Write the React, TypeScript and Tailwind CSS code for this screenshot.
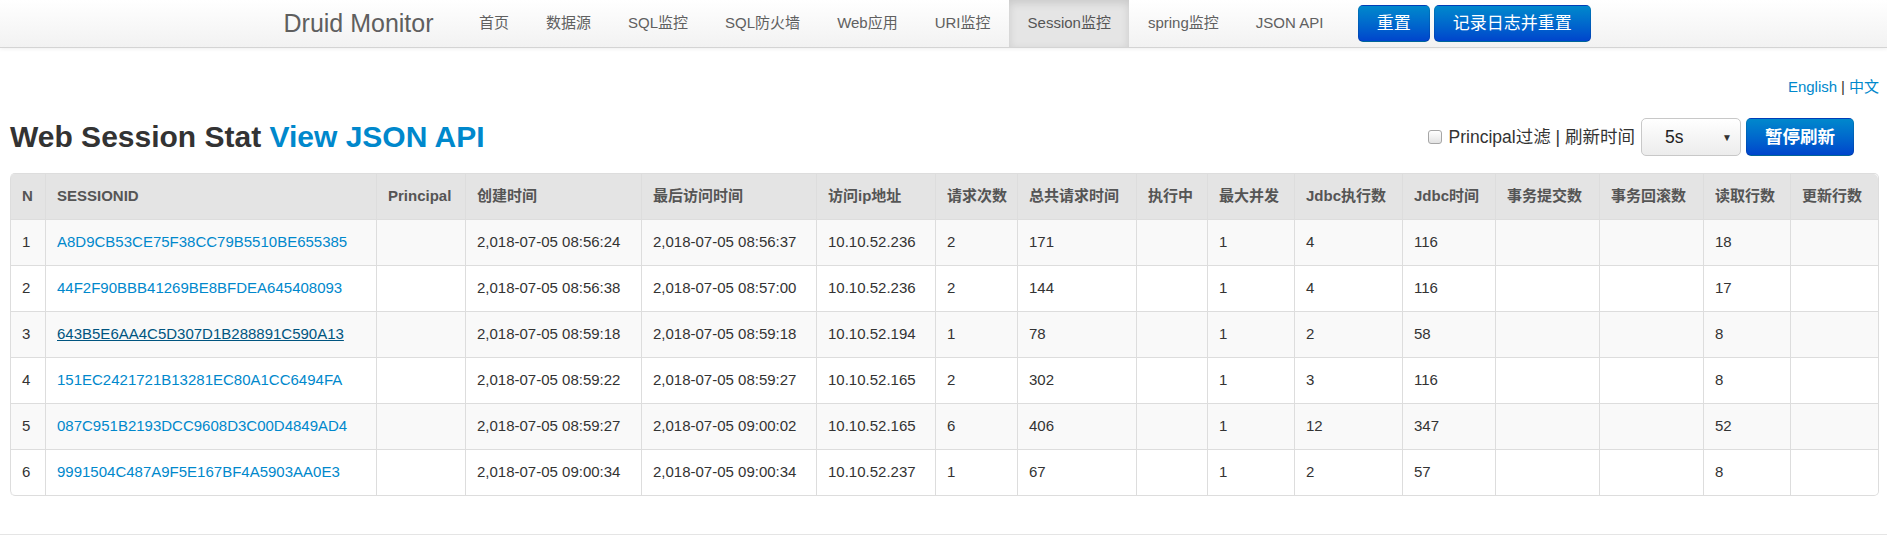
import React from "react"

const navItems = ["首页", "数据源", "SQL监控", "SQL防火墙", "Web应用", "URI监控", "Session监控", "spring监控", "JSON API"]

const columns: { label: string; width: number }[] = [
  { label: "N", width: 35 },
  { label: "SESSIONID", width: 331 },
  { label: "Principal", width: 89 },
  { label: "创建时间", width: 176 },
  { label: "最后访问时间", width: 175 },
  { label: "访问ip地址", width: 119 },
  { label: "请求次数", width: 82 },
  { label: "总共请求时间", width: 119 },
  { label: "执行中", width: 71 },
  { label: "最大并发", width: 87 },
  { label: "Jdbc执行数", width: 108 },
  { label: "Jdbc时间", width: 93 },
  { label: "事务提交数", width: 104 },
  { label: "事务回滚数", width: 104 },
  { label: "读取行数", width: 87 },
  { label: "更新行数", width: 88 },
]

const rows: string[][] = [
  ["1", "A8D9CB53CE75F38CC79B5510BE655385", "", "2,018-07-05 08:56:24", "2,018-07-05 08:56:37", "10.10.52.236", "2", "171", "", "1", "4", "116", "", "", "18", ""],
  ["2", "44F2F90BBB41269BE8BFDEA645408093", "", "2,018-07-05 08:56:38", "2,018-07-05 08:57:00", "10.10.52.236", "2", "144", "", "1", "4", "116", "", "", "17", ""],
  ["3", "643B5E6AA4C5D307D1B288891C590A13", "", "2,018-07-05 08:59:18", "2,018-07-05 08:59:18", "10.10.52.194", "1", "78", "", "1", "2", "58", "", "", "8", ""],
  ["4", "151EC2421721B13281EC80A1CC6494FA", "", "2,018-07-05 08:59:22", "2,018-07-05 08:59:27", "10.10.52.165", "2", "302", "", "1", "3", "116", "", "", "8", ""],
  ["5", "087C951B2193DCC9608D3C00D4849AD4", "", "2,018-07-05 08:59:27", "2,018-07-05 09:00:02", "10.10.52.165", "6", "406", "", "1", "12", "347", "", "", "52", ""],
  ["6", "9991504C487A9F5E167BF4A5903AA0E3", "", "2,018-07-05 09:00:34", "2,018-07-05 09:00:34", "10.10.52.237", "1", "67", "", "1", "2", "57", "", "", "8", ""],
]

// row 3 is shown hovered in the screenshot
const hoveredRow = 2

export default function App() {
  return (
    <div className="min-h-screen bg-white font-['Liberation_Sans','Noto_Sans_CJK_SC',sans-serif] text-[#333]">
      <nav className="h-[48px] border-b border-[#d4d4d4] bg-gradient-to-b from-white to-[#f2f2f2] shadow-[0_1px_4px_rgba(0,0,0,0.065)]">
        <div className="mx-auto flex h-[47px] w-[1320px] items-stretch">
          <a href="#" className="flex items-center pr-[27px] text-[25px] leading-none text-[#5f5f5f]">
            Druid Monitor
          </a>
          <ul className="flex items-stretch">
            {navItems.map((item) => (
              <li key={item}>
                <a
                  href="#"
                  className={
                    item === "Session监控"
                      ? "flex h-full items-center bg-[#e5e5e5] px-[18.5px] text-[15px] text-[#555] shadow-[inset_0_3px_8px_rgba(0,0,0,0.125)]"
                      : "flex h-full items-center px-[18.5px] text-[15px] text-[#606060]"
                  }
                >
                  {item}
                </a>
              </li>
            ))}
          </ul>
          <div className="ml-[16px] flex items-center gap-[4px]">
            <button className="h-[37px] rounded-[5px] border border-[rgba(0,0,0,0.1)] border-b-[rgba(0,0,0,0.25)] bg-gradient-to-b from-[#0088cc] to-[#0044cc] px-[18px] text-[17px] text-white">
              重置
            </button>
            <button className="h-[37px] rounded-[5px] border border-[rgba(0,0,0,0.1)] border-b-[rgba(0,0,0,0.25)] bg-gradient-to-b from-[#0088cc] to-[#0044cc] px-[18px] text-[17px] text-white">
              记录日志并重置
            </button>
          </div>
        </div>
      </nav>

      <div className="pl-[10px] pr-[8px]">
        <div className="mt-[29px] flex justify-end text-[15px] leading-[20px]">
          <a href="#" className="text-[#0088cc]">English</a>
          <span className="px-[4px] text-[#333]">|</span>
          <a href="#" className="text-[#0088cc]">中文</a>
        </div>

        <div className="mt-[21px] flex h-[38px] items-center justify-between">
          <h3 className="text-[30px] font-bold leading-[38px] text-[#333]">
            Web Session Stat <a href="#" className="text-[#0088cc]">View JSON API</a>
          </h3>
          <div className="mr-[25px] flex items-center">
            <span className="h-[14px] w-[14px] rounded-[3px] border border-[#a6a6a6] bg-gradient-to-b from-white to-[#e3e3e3]" />
            <span className="ml-[7px] text-[17.5px] leading-[24px] text-[#333]">Principal过滤 | 刷新时间</span>
            <div className="ml-[6px] flex h-[38px] w-[100px] items-center justify-between rounded-[5px] border border-[#c8c8c8] bg-gradient-to-b from-white to-[#ececec] pl-[23px] pr-[8px]">
              <span className="text-[17.5px] text-[#222]">5s</span>
              <span className="text-[10px] text-[#333]">▼</span>
            </div>
            <button className="ml-[5px] h-[38px] w-[108px] rounded-[5px] border border-[rgba(0,0,0,0.1)] border-b-[rgba(0,0,0,0.25)] bg-gradient-to-b from-[#0088cc] to-[#0044cc] text-[17.5px] font-bold text-white">
              暂停刷新
            </button>
          </div>
        </div>

        <table className="mt-[17px] w-full table-fixed border-separate border-spacing-0 rounded-[5px] border border-l-0 border-[#ddd] text-[15px]">
          <colgroup>
            {columns.map((c) => (
              <col key={c.label} style={{ width: c.width }} />
            ))}
          </colgroup>
          <thead>
            <tr className="h-[45px]">
              {columns.map((c, i) => (
                <th
                  key={c.label}
                  className={
                    "whitespace-nowrap border-l border-[#ddd] bg-[#e4e4e4] px-[11px] py-0 text-left align-middle font-bold text-[#555] " +
                    (i === 0 ? "rounded-tl-[5px]" : i === columns.length - 1 ? "rounded-tr-[5px]" : "")
                  }
                >
                  {c.label}
                </th>
              ))}
            </tr>
          </thead>
          <tbody>
            {rows.map((row, r) => (
              <tr key={row[0]} className={r % 2 === 0 ? "h-[46px] bg-[#f9f9f9]" : "h-[46px] bg-white"}>
                {row.map((cell, i) => (
                  <td
                    key={i}
                    className={
                      "whitespace-nowrap border-l border-t border-[#ddd] px-[11px] py-0 align-middle " +
                      (r === rows.length - 1 && i === 0 ? "rounded-bl-[5px] " : "") +
                      (r === rows.length - 1 && i === row.length - 1 ? "rounded-br-[5px]" : "")
                    }
                  >
                    {i === 1 ? (
                      <a
                        href="#"
                        className={r === hoveredRow ? "text-[#005580] underline" : "text-[#0088cc]"}
                      >
                        {cell}
                      </a>
                    ) : (
                      cell
                    )}
                  </td>
                ))}
              </tr>
            ))}
          </tbody>
        </table>
      </div>

      <div className="mt-[38px] border-t border-[#e5e5e5]" />
    </div>
  )
}
